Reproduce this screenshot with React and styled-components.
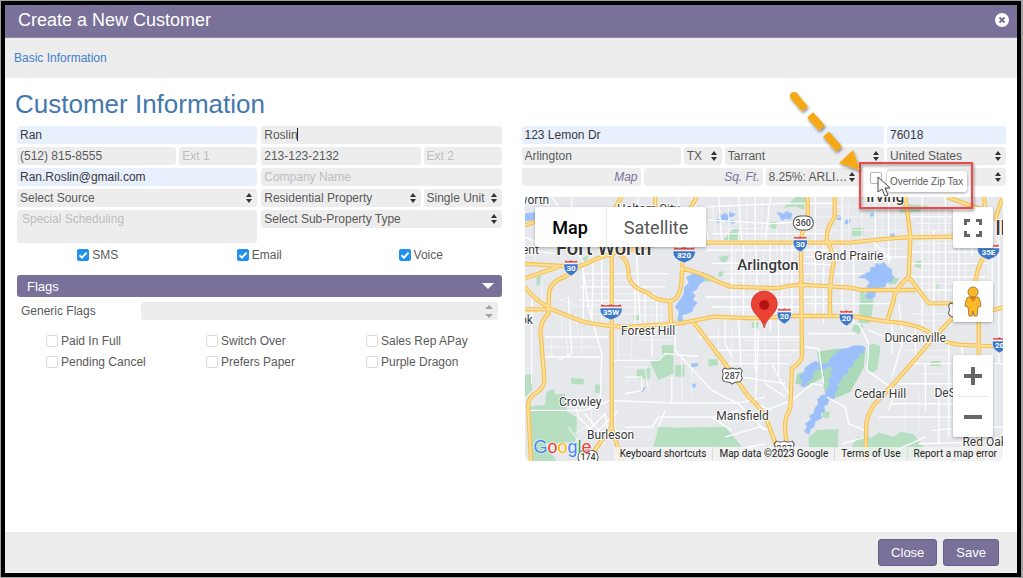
import React from "react";
import styled, { createGlobalStyle, css } from "styled-components";

const purple = "#79719a";
const panel = "#ededed";
const sans = '"Liberation Sans", Arial, sans-serif';
const mapFont = 'Roboto, "Liberation Sans", sans-serif';

const GlobalStyle = createGlobalStyle`
  *, *::before, *::after { box-sizing: border-box; }
  body { margin: 0; background: #a3a3a3; font-family: ${sans}; font-size: 12px; color: #5a5a5a; }
  input, select, textarea, button { font: inherit; color: inherit; margin: 0; }
`;

/* ---------- dialog ---------- */

const Page = styled.div`
  min-height: 100vh;
  padding: 1px 2px 1px 1px;
  display: flex;
`;
const Dialog = styled.div`
  flex: 1;
  min-width: 0;
  display: flex;
  flex-direction: column;
  background: #fff;
  border: 4px solid #000;
`;
const TitleBar = styled.header`
  display: flex;
  align-items: center;
  justify-content: space-between;
  height: 33px;
  padding: 0 8px 2px 13px;
  background: ${purple};
  border-bottom: 1px solid #9089ad;
  color: #fff;
`;
const Title = styled.h1`
  margin: 0;
  font-size: 18px;
  line-height: 24px;
  font-weight: 400;
`;
const CloseIconButton = styled.button`
  display: flex;
  padding: 0;
  border: 0;
  background: none;
  cursor: pointer;
`;
const TabBar = styled.nav`
  display: flex;
  align-items: center;
  height: 40px;
  padding: 0 9px;
  background: ${panel};
`;
const TabLink = styled.a`
  color: #3f80cb;
  text-decoration: none;
`;
const Body = styled.main`
  flex: 1;
  padding: 10px 11px 20px 12px;
`;
const SectionTitle = styled.h2`
  margin: 0 0 6px -2px;
  font-size: 26px;
  line-height: 32px;
  font-weight: 400;
  color: #4478ad;
`;
const Columns = styled.div`
  display: grid;
  grid-template-columns: minmax(0, 1fr) minmax(0, 1fr);
  column-gap: 20px;
`;
const Split = styled.div`
  display: grid;
  grid-template-columns: minmax(0, 1fr) minmax(0, 1fr);
  column-gap: 4px;
`;
const Stack = styled.div`
  display: flex;
  flex-direction: column;
  gap: 3px;
  min-width: 0;
`;
const FieldRow = styled.div`
  display: flex;
  gap: 3px;
  height: 18px;
`;
const Footer = styled.footer`
  display: flex;
  align-items: center;
  justify-content: flex-end;
  gap: 6px;
  height: 41px;
  padding: 0 18px 0 0;
  background: ${panel};
`;
const ActionButton = styled.button`
  height: 27px;
  padding: 0 12px;
  border: 1px solid #68608b;
  border-radius: 3px;
  background: ${purple};
  color: #fff;
  font-size: 13px;
  cursor: pointer;
`;

/* ---------- fields ---------- */

const fieldLook = css`
  width: 100%;
  height: 18px;
  padding: 0 3px;
  border: 0;
  border-radius: 3px;
  outline: 0;
  background: ${(p) => (p.$filled ? "#e8effd" : panel)};
  color: ${(p) => (p.$filled ? "#3a3a3a" : "#5a5a5a")};
  &::placeholder { color: #bdbdbd; opacity: 1; }
`;
const FieldSlot = styled.div`
  position: relative;
  min-width: 0;
  flex: ${(p) => (p.$width ? `0 0 ${p.$width}px` : "1 1 0")};
`;
const Input = styled.input`${fieldLook}`;
const UnitInput = styled(Input)`
  text-align: right;
  padding-right: 3px;
  &::placeholder { color: #7a739f; font-style: italic; }
`;
const Notes = styled.textarea`
  ${fieldLook}
  display: block;
  height: 33px;
  padding: 2px 5px;
  resize: none;
`;
const NativeSelect = styled.select`
  ${fieldLook}
  display: block;
  appearance: none;
`;
const Arrows = styled.svg`
  position: absolute;
  right: 5px;
  top: 4px;
  pointer-events: none;
`;
const SpinArrows = styled(Arrows)`
  top: 3px;
`;
const Caret = styled.span`
  position: absolute;
  left: 36px;
  top: 2px;
  width: 1px;
  height: 13px;
  background: #222;
`;

function Field({ label, width, children, as: Control = Input, ...rest }) {
  return (
    <FieldSlot $width={width}>
      <Control aria-label={label} {...rest} />
      {children}
    </FieldSlot>
  );
}

function Select({ label, value, width, spin }) {
  return (
    <FieldSlot $width={width}>
      <NativeSelect aria-label={label}>
        <option>{value}</option>
      </NativeSelect>
      {spin ? (
        <SpinArrows width="8" height="13" viewBox="0 0 8 13" fill="#a3a3a3">
          <path d="M4 0 8 4H0ZM0 9H8L4 13Z" />
        </SpinArrows>
      ) : (
        <Arrows width="6" height="10" viewBox="0 0 6 10" fill="#333">
          <path d="M3 0 6 4H0ZM0 6H6L3 10Z" />
        </Arrows>
      )}
    </FieldSlot>
  );
}

const Tick = styled.input`
  appearance: none;
  display: block;
  width: 12px;
  height: 12px;
  border: 1px solid #dcdcdc;
  border-radius: 2px;
  background: #fff;
  &:checked { background: #2290f0; border-color: #2290f0; }
`;
const TickBox = styled.span`
  position: relative;
  display: block;
`;
const TickMark = styled.svg`
  position: absolute;
  inset: 0;
  pointer-events: none;
`;
const CheckLabel = styled.label`
  display: flex;
  align-items: center;
  gap: 3px;
`;

function Check({ label, checked }) {
  return (
    <CheckLabel>
      <TickBox>
        <Tick type="checkbox" defaultChecked={checked} />
        {checked && (
          <TickMark width="12" height="12" viewBox="0 0 12 12">
            <path d="M2.5 6.2 5 8.6 9.6 3.6" fill="none" stroke="#fff" strokeWidth="2" />
          </TickMark>
        )}
      </TickBox>
      {label}
    </CheckLabel>
  );
}

const ContactChecks = styled.div`
  display: grid;
  grid-template-columns: repeat(3, 1fr);
  justify-items: center;
  height: 16px;
  margin: 4px 0 12px;
`;
const FlagsToggle = styled.button`
  display: flex;
  align-items: center;
  justify-content: space-between;
  width: 100%;
  height: 22px;
  padding: 0 8px 0 10px;
  border: 0;
  border-radius: 3px;
  background: ${purple};
  color: #fff;
  font-size: 13px;
`;
const GenericRow = styled.div`
  display: flex;
  align-items: center;
  margin: 5px 4px 12px;
`;
const GenericLabel = styled.span`
  flex: 0 0 120px;
`;
const FlagGrid = styled.div`
  display: grid;
  grid-template-columns: repeat(3, 160px);
  grid-auto-rows: 18px;
  row-gap: 3px;
  padding-left: 29px;
`;

/* ---------- zip tax override callout ---------- */

const OverrideCell = styled.div`
  position: relative;
  flex: 0 0 21px;
  z-index: 2;
`;
const OverrideTick = styled(Tick)`
  margin: 4px 0 0 7px;
  border-color: #b5b5b5;
`;
const Tooltip = styled.label`
  position: absolute;
  left: 24px;
  top: 3px;
  width: 80px;
  padding: 0 3px;
  border-radius: 3px;
  background: #fff;
  box-shadow: 0 1px 3px rgba(0, 0, 0, 0.4);
  font-size: 10px;
  line-height: 21px;
  white-space: nowrap;
`;
const Callout = styled.svg`
  position: absolute;
  left: -83px;
  top: -88px;
  overflow: visible;
  pointer-events: none;
`;

function OverrideZipTax() {
  return (
    <OverrideCell>
      <OverrideTick id="override" type="checkbox" />
      <Tooltip htmlFor="override">Override Zip Tax</Tooltip>
      <Callout width="200" height="140" viewBox="0 0 200 140">
        <defs>
          <filter id="soft" x="-20%" y="-20%" width="150%" height="150%">
            <feDropShadow dx="1" dy="2" stdDeviation="1.5" floodOpacity="0.45" />
          </filter>
        </defs>
        <rect x="80" y="83" width="112" height="45" fill="none" stroke="#f0474a" strokeWidth="2" filter="url(#soft)" />
        <g filter="url(#soft)" stroke="#f6a915" strokeWidth="8" fill="#f6a915">
          <circle cx="14" cy="16" r="4" stroke="none" />
          <path d="M14 16 25 29M30 35 42 48M46 54 59 69" />
          <path d="M73 70 59 83 80 90Z" stroke="none" />
        </g>
        <path d="M98 97v15l4-3 3 7 3-1-3-7h5Z" fill="#fff" stroke="#444" />
      </Callout>
    </OverrideCell>
  );
}

/* ---------- map ---------- */

const MapFrame = styled.section`
  position: relative;
  height: 264px;
  margin: 11px 3px 0;
  overflow: hidden;
  border-radius: 2px 2px 6px 6px;
  background: #e6e8ec;
  font-family: ${mapFont};
`;
const MapCanvas = styled.svg`
  display: block;
  width: 100%;
  height: 100%;
  text {
    font-family: ${mapFont};
    fill: #383838;
  }
`;
const MapTypes = styled.div`
  position: absolute;
  left: 10px;
  top: 10px;
  display: flex;
  height: 40px;
  border-radius: 2px;
  background: #fff;
  box-shadow: 0 1px 3px rgba(0, 0, 0, 0.3);
`;
const MapType = styled.button`
  width: ${(p) => p.$width}px;
  padding: 0;
  border: 0;
  background: none;
  font-size: 18px;
  font-weight: ${(p) => (p.$active ? 500 : 400)};
  color: ${(p) => (p.$active ? "#000" : "#565656")};
  & + & { border-left: 1px solid #ececec; }
`;
const MapControls = styled.div`
  position: absolute;
  top: 10px;
  right: 10px;
  display: flex;
  flex-direction: column;
  gap: 33px;
`;
const ControlGroup = styled.div`
  display: flex;
  flex-direction: column;
  width: 40px;
  border-radius: 2px;
  background: #fff;
  box-shadow: 0 1px 3px rgba(0, 0, 0, 0.3);
`;
const ControlButton = styled.button`
  display: flex;
  align-items: center;
  justify-content: center;
  height: 41px;
  padding: 0;
  border: 0;
  background: none;
`;
const ControlDivider = styled.span`
  height: 1px;
  margin: 0 5px -1px;
  background: #e6e6e6;
`;
const Attribution = styled.div`
  position: absolute;
  right: 0;
  bottom: 0;
  display: flex;
  background: rgba(245, 245, 245, 0.75);
  font-size: 10px;
  line-height: 14px;
  color: #222;
  white-space: nowrap;
`;
const AttributionItem = styled.a`
  padding: 0 6px;
  color: inherit;
  text-decoration: none;
  & + & { border-left: 1px solid #ddd; }
`;
const Logo = styled.a`
  position: absolute;
  left: 9px;
  bottom: 3px;
  font: 18px/22px ${sans};
  text-decoration: none;
  text-shadow: 0 0 1px #fff, 0 0 2px #fff;
`;
const LogoLetter = styled.span`
  color: ${(p) => p.$color};
`;

const PARKS = [
  "1030,444 1045,440 1065,448 1062,480 1055,519 1040,526 1025,519 1022,480",
  "875,699 940,696 937,754 850,754 850,722",
  "980,744 1000,720 1040,722 1060,706 1105,720 1125,704 1165,712 1195,749 1185,784 985,774",
  "5,629 60,624 65,584 85,576 90,592 120,589 125,644 155,660 155,714 150,735 60,740 95,792 22,792",
  "0,532 24,532 20,580 0,600",
  "400,689 450,692 600,689 650,749 385,749",
  "335,519 375,514 375,547 335,544",
  "375,494 410,479 410,444 445,444 445,529 400,549",
  "450,504 478,504 478,539 450,539",
  "550,487 580,487 578,504 550,509",
  "138,543 176,545 176,562 138,560",
  "210,562 226,562 226,588 210,588",
  "625,94 640,91 637,129 595,129",
  "775,32 812,0 845,0 835,39 815,29",
  "735,76 755,74 753,95 735,97",
  "580,180 612,175 605,192 590,197",
  "580,225 595,222 590,239 580,240",
  "545,229 570,240 550,256 530,248",
  "980,94 1015,91 1013,117 980,117",
  "1115,19 1215,27 1185,44 1125,49",
  "1005,279 1045,309 1035,379 1000,379",
  "1095,242 1122,244 1110,262 1090,262",
  "1233,257 1245,257 1243,278 1233,278",
  "1170,192 1190,189 1188,215 1168,210",
  "34,240 48,235 46,262 35,269",
  "165,190 190,173 187,188 170,198",
  "325,355 342,352 345,368 325,370",
  "680,376 700,374 697,393 680,392",
  "1215,492 1245,492 1245,508 1215,507",
  "985,384 1015,384 1000,412 980,400",
  "895,640 915,645 910,665 890,660",
];

const LAKES = [
  "828,568 832,552 822,538 836,528 840,512 856,500 872,492 882,500 906,500 918,482 930,472 948,456 968,454 985,446 1012,446 1020,454 1012,470 1004,466 1000,482 985,492 984,506 968,514 966,530 952,536 946,552 934,562 940,574 928,590 926,606 912,604 906,622 896,626 898,642 886,650 888,664 870,672 866,690 854,696 852,712 838,704 846,688 840,680 858,668 852,656 866,650 868,634 880,620 876,608 888,596 902,592 906,574 914,562 908,548 922,536 914,524 926,514 910,508 896,518 876,516 862,528 862,544 848,552 840,570",
  "1020,229 1035,225 1036,212 1050,210 1052,199 1064,204 1075,196 1084,208 1100,219 1098,232 1107,240 1098,254 1084,256 1078,270 1060,272 1050,286 1048,300 1036,306 1020,299 1028,282 1024,270 1034,256 1020,244 1000,242",
  "465,309 476,292 478,270 492,258 484,242 505,230 535,227 532,240 540,250 522,262 514,278 500,284 510,296 502,308 516,318 505,330 500,344 484,350 470,354 475,385 458,370 462,345 450,330",
  "0,51 35,46 38,67 0,72",
  "755,46 775,52 782,44 800,50 796,68 782,64 770,71 765,60",
  "580,50 590,55 600,48 612,62 604,78 598,66 590,72",
  "610,45 630,52 622,60 608,57",
  "575,66 584,70 580,78 574,74",
  "618,70 632,74 624,80 616,77",
  "937,56 950,58 945,70 935,66",
  "960,70 976,68 970,82 960,80",
  "1035,50 1045,48 1043,62 1035,60",
  "1095,112 1110,112 1105,122 1095,122",
  "500,500 518,500 518,506 500,510",
  "500,560 512,562 508,572 500,570",
  "348,580 362,570 360,574 350,585",
];

const MINOR_ROADS = `M80 0 110 45 170 190 190 330 230 470 225 620M140 0V45L200 140M340 0 330 90 345 380
M0 120 60 150H260M0 160 90 170M170 230H430M165 270H420M160 310H400M175 190V380M205 180 200 380M230 185V370M330 250V380M360 290V400M395 300V400
M130 300 140 470 100 490M20 300V560M60 420H250M60 480H230M0 640 180 640 255 610 440 618H640L720 600
M260 490H400L420 470 520 478M380 400V480M450 390V460L560 580 640 620 720 700M300 540H350V580L300 590M440 540V618
M460 0V120M500 20 540 60 550 137M580 0 590 137M640 0 650 137M690 0V137M735 0 720 137M545 30 760 20H930M550 70 740 80 840 74M560 110H920
M545 160H930M560 200 760 195 930 205M600 230H930M620 140V360M655 140V360M690 140 700 360M735 140V400M770 140V360M800 140V360M870 0V359M895 140V380
M540 300H920M560 330H830M600 360V440L620 480M640 360 650 560M690 365V520M760 370V540M520 420H830M560 460H820M600 500H790M650 540 780 560M700 400 690 620 740 640
M840 180H1150M850 230H1020M840 320H1100M950 0V360M985 130V380M1050 0V200M1090 0V200M1040 130 1100 190M1120 320 1130 400
M1155 60H1400M1155 165H1400M1155 200H1390M1150 240H1380M1200 280H1380M1190 0V390M1225 100V400M1260 0V330M1300 120V260M1340 50V180M1400 160V380M1420 80V500
M850 410H990M840 450 880 455 895 560M1000 380 1030 440 1025 520 1110 580 1090 640M1030 400 1130 440 1100 540
M1100 380V470M1170 390V480M1270 440V720M1310 440V700M1160 500H1434M1120 560H1300M1100 620H1290M1060 660H1320M1240 560V740M1200 500V640M1400 470V730
M895 565 860 560 800 610 720 640M905 600 960 630 970 680 1020 700M1020 720 950 740M800 600 770 560 740 500M720 560 780 600
M180 650 220 700 280 640M190 700 240 650 250 720M300 690H380L400 660H560L640 640M420 640 400 690M150 620 160 660 240 740
M600 720 700 690 740 700M620 760 720 740M560 660 620 700M1220 700 1340 690 1434 690M1180 740 1360 735M1110 760 1200 720`;

const FINE_ROADS = `M0 20H60L100 60M30 80V190M50 240V330M90 300 160 330 240 320M110 350V430M150 350 160 420
M180 250H420M180 290H400M190 330H430M190 350 420 355M250 200V370M310 200V250M380 320V390M410 320V380
M560 20 575 137M610 20V130M665 0V130M710 0V130M755 90V350M785 90V350M860 140V350M590 95H740M590 215H820M590 250H820M590 340H820
M630 160V350M675 160V350M715 160V350M720 400V560M740 420H820M580 390V500M620 390V540M660 430H820M640 475H800
M870 30H1130M870 60H1140M860 100H1140M970 20V180M1010 10V180M1070 20V190M1110 20V190M860 160 1130 155M1170 80H1390M1170 100H1390
M1170 140H1380M1175 220H1350M1180 260H1350M1210 20V300M1240 20V310M1280 130V330M1320 130V300M1390 160V300M1150 350H1300M1170 370H1280
M1130 460H1270M1150 480H1270M1180 530H1270M1290 560V680M1330 470V690M1380 470V690M1410 500V700M1140 600V700M1180 580V700
M80 410V480M120 400 130 480M170 400V470M60 450H230M280 400V480M320 400V480M340 430H440M300 510H360L370 580M470 480V620M500 510V600
M200 610V680L150 710M230 700H320M130 690 180 760M270 620V740`;

const HIGHWAYS = [
  "M0 201 110 207C150 220 170 205 225 182S330 160 400 140L545 137H975L1080 126 1130 122 1285 119 1380 122",
  "M0 244 100 210M0 270Q30 310 70 330",
  "M0 337H80L160 369Q200 384 300 390L465 379 565 359 685 364 805 357H975L1085 374Q1170 378 1215 409T1300 443L1434 449",
  "M160 213 120 239Q75 255 72 290L70 350Q40 380 48 420L58 550Q55 575 30 590T10 640L18 792",
  "M260 175V690L290 792M258 690 205 765",
  "M285 175Q310 190 310 229T370 289Q390 310 430 312T470 229L475 149 480 60 515 0M435 314 438 385",
  "M290 0 262 45M390 0V40M70 60 0 85",
  "M465 214Q510 222 545 239T615 269L755 274Q800 264 835 264L975 272 1005 279H1170",
  "M505 378 520 395 610 514 670 599Q710 635 725 670L755 750",
  "M845 0Q855 70 830 110L827 139 830 474Q830 495 800 514L795 634Q775 670 780 700L787 792",
  "M928 0V60Q900 100 905 129 925 170 925 199 910 260 915 359",
  "M1140 0 1155 119 1150 240Q1105 280 1105 309L1085 374M1153 244 1210 319H1300",
  "M1265 0 1340 28 1400 45M1375 0 1383 60M1430 5 1410 65 1434 90",
  "M1395 150Q1365 190 1357 220L1345 270 1360 384V792M1400 340 1434 330",
  "M1320 320 1215 434 1115 549 1045 624Q1023 660 1023 684L1020 792",
];

const ShieldText = styled.text`
  && { fill: ${(p) => (p.$inverse ? "#fff" : "#444")}; }
  font-size: ${(p) => (p.$inverse ? 8 : 9)}px;
  font-weight: ${(p) => (p.$inverse ? 700 : 500)};
  text-anchor: middle;
`;
const Interstate = ({ x, y, children, wide }) => {
  const w = wide ? 11 : 7;
  return (
    <g transform={`translate(${x} ${y})`}>
      <path d={`M${-w} -3C${-w - 1} 4 ${-w / 2} 7 0 9C${w / 2} 7 ${w + 1} 4 ${w} -3Z`} fill="#3c78c8" stroke="#fff" strokeWidth=".6" />
      <path d={`M${1 - w} -7Q${-w / 2} -5 0 -7Q${w / 2} -5 ${w - 1} -7L${w} -4H${-w}Z`} fill="#d94b4b" stroke="#fff" strokeWidth=".6" />
      <ShieldText y="4" $inverse>{children}</ShieldText>
    </g>
  );
};
const RouteShield = ({ x, y, children, us }) => (
  <g transform={`translate(${x} ${y})`}>
    {us ? (
      <path d="M-8 -8Q-4 -6 0 -8 4 -6 8 -8L10 -5Q8 -2 10 2 9 6 5 6 2 6 0 8 -2 6 -5 6 -9 6 -10 2 -8 -2 -10 -5Z" fill="#fff" stroke="#555" />
    ) : (
      <rect x="-10" y="-7" width="20" height="14" rx="7" fill="#fff" stroke="#555" />
    )}
    <ShieldText y="3">{children}</ShieldText>
  </g>
);
const PlaceName = styled.text`
  font-size: ${(p) => p.$size || 12}px;
  font-weight: ${(p) => (p.$size ? 500 : 400)};
  paint-order: stroke;
  stroke: #fff;
  stroke-width: 2px;
  stroke-linejoin: round;
`;

const PLACES = [
  [-8, 7, "Worth"], [92, 16, "Haltom City"], [31, 58, "Fort Worth", 20], [-3, 57, "ent"],
  [-5, 127, "ok"], [96, 138, "Forest Hill"], [212, 73, "Arlington", 15], [289, 63, "Grand Prairie"],
  [341, 5, "Irving", 15], [470, 38, "ll", 20], [359, 145, "Duncanville"], [329, 201, "Cedar Hill"],
  [409, 200, "DeSoto"], [34, 209, "Crowley"], [191, 223, "Mansfield"], [62, 242, "Burleson"], [437, 249, "Red Oak"],
];

function MapArt() {
  return (
    <MapCanvas viewBox="0 0 478 264" preserveAspectRatio="xMidYMid slice" role="img" aria-label="Map of Arlington">
      <g transform="scale(.33333)" fill="none" strokeLinejoin="round">
        <g fill="#b5dfc0">{PARKS.map((p) => <polygon key={p} points={p} />)}</g>
        <path d="M875 464 935 455 1020 460 1015 514 975 584 940 600 915 606 900 590 892 560 895 540 860 560 845 568 810 559 815 530 835 525 880 500Z" fill="#acdab8" />
        <g fill="#9cc0f9" stroke="#9cc0f9" strokeWidth="2">{LAKES.map((p) => <polygon key={p} points={p} />)}</g>
        <path d={FINE_ROADS} stroke="#f3f4f7" strokeWidth="3" />
        <path d={MINOR_ROADS} stroke="#fff" strokeWidth="4" />
        <path d={HIGHWAYS.join("")} stroke="#f7c052" strokeWidth="13" />
        <path d={HIGHWAYS.join("")} stroke="#fde5a3" strokeWidth="6" />
        <path d={HIGHWAYS.join("")} stroke="#f9cf72" strokeWidth="1" />
      </g>
      {PLACES.map(([x, y, name, size]) => (
        <PlaceName key={name} x={x} y={y} $size={size}>{name}</PlaceName>
      ))}
      <Interstate x={46} y={70}>30</Interstate>
      <Interstate x={159} y={57} wide>820</Interstate>
      <Interstate x={86} y={114} wide>35W</Interstate>
      <Interstate x={275} y={46}>30</Interstate>
      <Interstate x={259} y={118}>20</Interstate>
      <Interstate x={321} y={120}>20</Interstate>
      <Interstate x={463} y={54} wide>35E</Interstate>
      <Interstate x={474} y={147}>20</Interstate>
      <RouteShield x={278} y={26}>360</RouteShield>
      <RouteShield x={207} y={179} us>287</RouteShield>
      <RouteShield x={259} y={252} us>287</RouteShield>
      <RouteShield x={63} y={260}>174</RouteShield>
      <RouteShield x={433} y={114} us />
      <path d="M239 131C237 120 226 117 226 107a13 13 0 0 1 26 0C252 117 241 120 239 131Z" fill="#ea4335" stroke="#c5221f" strokeWidth=".6" />
      <circle cx="239" cy="108" r="5" fill="#b31412" />
    </MapCanvas>
  );
}

const LOGO = [["G", "#4285f4"], ["o", "#ea4335"], ["o", "#fbbc05"], ["g", "#4285f4"], ["l", "#34a853"], ["e", "#ea4335"]];

function PropertyMap() {
  return (
    <MapFrame>
      <MapArt />
      <MapTypes>
        <MapType $width={71} $active>Map</MapType>
        <MapType $width={100}>Satellite</MapType>
      </MapTypes>
      <MapControls>
        <ControlGroup>
          <ControlButton aria-label="Fullscreen">
            <svg width="20" height="20" viewBox="0 0 20 20" fill="none" stroke="#666" strokeWidth="3">
              <path d="M2.500 7V2.500H7M13 2.500h4.500V7M17.500 13v4.500H13M7 17.500H2.500V13" />
            </svg>
          </ControlButton>
        </ControlGroup>
        <ControlGroup>
          <ControlButton aria-label="Street View">
            <svg width="18" height="32" viewBox="0 0 18 32" fill="#fbb829" stroke="#a9803a">
              <path d="M4 11H14Q16 12 17 20L14 21 13 30H10L9 25 8 30H5L4 21 1 20Q2 12 4 11Z" />
              <path d="M5 11H13L9 16Z" fill="#e67c1b" stroke="none" />
              <circle cx="9" cy="6" r="5" />
            </svg>
          </ControlButton>
        </ControlGroup>
        <ControlGroup>
          <ControlButton aria-label="Zoom in">
            <svg width="18" height="18" viewBox="0 0 18 18"><path d="M9 0V18M0 9H18" stroke="#666" strokeWidth="4" /></svg>
          </ControlButton>
          <ControlDivider />
          <ControlButton aria-label="Zoom out">
            <svg width="18" height="18" viewBox="0 0 18 18"><path d="M0 9H18" stroke="#666" strokeWidth="4" /></svg>
          </ControlButton>
        </ControlGroup>
      </MapControls>
      <Logo href="#google" aria-label="Google">
        {LOGO.map(([letter, color], i) => <LogoLetter key={i} $color={color}>{letter}</LogoLetter>)}
      </Logo>
      <Attribution>
        <AttributionItem href="#keys">Keyboard shortcuts</AttributionItem>
        <AttributionItem href="#data">Map data ©2023 Google</AttributionItem>
        <AttributionItem href="#terms">Terms of Use</AttributionItem>
        <AttributionItem href="#report">Report a map error</AttributionItem>
      </Attribution>
    </MapFrame>
  );
}

/* ---------- page ---------- */

const FLAGS = ["Paid In Full", "Switch Over", "Sales Rep APay", "Pending Cancel", "Prefers Paper", "Purple Dragon"];

function ContactForm() {
  return (
    <div>
      <Split>
        <Stack>
          <FieldRow><Field label="First name" defaultValue="Ran" $filled /></FieldRow>
          <FieldRow>
            <Field label="Phone 1" defaultValue="(512) 815-8555" />
            <Field label="Extension 1" placeholder="Ext 1" width={78} />
          </FieldRow>
          <FieldRow><Field label="Email address" defaultValue="Ran.Roslin@gmail.com" $filled /></FieldRow>
          <FieldRow><Select label="Source" value="Select Source" /></FieldRow>
          <Notes aria-label="Special scheduling" placeholder="Special Scheduling" />
        </Stack>
        <Stack>
          <FieldRow><Field label="Last name" defaultValue="Roslin"><Caret /></Field></FieldRow>
          <FieldRow>
            <Field label="Phone 2" defaultValue="213-123-2132" />
            <Field label="Extension 2" placeholder="Ext 2" width={78} />
          </FieldRow>
          <FieldRow><Field label="Company" placeholder="Company Name" /></FieldRow>
          <FieldRow>
            <Select label="Property type" value="Residential Property" />
            <Select label="Units" value="Single Unit" width={78} />
          </FieldRow>
          <FieldRow><Select label="Sub-property type" value="Select Sub-Property Type" /></FieldRow>
        </Stack>
      </Split>
      <ContactChecks>
        <Check label="SMS" checked />
        <Check label="Email" checked />
        <Check label="Voice" checked />
      </ContactChecks>
      <FlagsToggle>
        Flags
        <svg width="12" height="6" viewBox="0 0 12 6"><path d="M0 0H12L6 6Z" fill="#fff" /></svg>
      </FlagsToggle>
      <GenericRow>
        <GenericLabel>Generic Flags</GenericLabel>
        <Select label="Generic Flags" value="" spin />
      </GenericRow>
      <FlagGrid>
        {FLAGS.map((flag) => <Check key={flag} label={flag} />)}
      </FlagGrid>
    </div>
  );
}

function AddressForm() {
  return (
    <div>
      <Stack>
        <FieldRow>
          <Field label="Street" defaultValue="123 Lemon Dr" $filled />
          <Field label="Zip" defaultValue="76018" width={119} $filled />
        </FieldRow>
        <FieldRow>
          <Field label="City" defaultValue="Arlington" />
          <Select label="State" value="TX" width={38} />
          <Select label="County" value="Tarrant" />
          <Select label="Country" value="United States" width={119} />
        </FieldRow>
        <FieldRow>
          <Field label="Map" as={UnitInput} placeholder="Map" width={119} />
          <Field label="Square feet" as={UnitInput} placeholder="Sq. Ft." width={119} />
          <Select label="Tax rate" value="8.25%: ARLI…" />
          <OverrideZipTax />
          <Select label="Region" value="" width={119} />
        </FieldRow>
      </Stack>
      <PropertyMap />
    </div>
  );
}

export default function App() {
  return (
    <Page>
      <GlobalStyle />
      <Dialog role="dialog" aria-label="Create a New Customer">
        <TitleBar>
          <Title>Create a New Customer</Title>
          <CloseIconButton aria-label="Close dialog">
            <svg width="14" height="14" viewBox="0 0 14 14">
              <circle cx="7" cy="7" r="7" fill="#fff" />
              <path d="M4.500 4.500 9.500 9.500M9.500 4.500 4.500 9.500" stroke={purple} strokeWidth="2" />
            </svg>
          </CloseIconButton>
        </TitleBar>
        <TabBar><TabLink href="#basic">Basic Information</TabLink></TabBar>
        <Body>
          <SectionTitle>Customer Information</SectionTitle>
          <Columns>
            <ContactForm />
            <AddressForm />
          </Columns>
        </Body>
        <Footer>
          <ActionButton>Close</ActionButton>
          <ActionButton>Save</ActionButton>
        </Footer>
      </Dialog>
    </Page>
  );
}
